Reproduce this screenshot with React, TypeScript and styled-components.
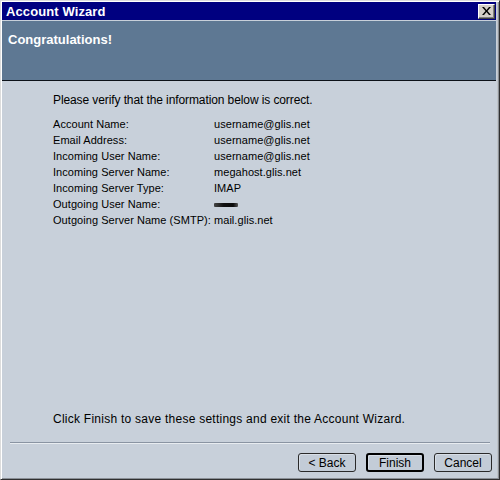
import { Fragment } from "react";
import styled, { createGlobalStyle } from "styled-components";

const Global = createGlobalStyle`
  html, body {
    margin: 0;
    padding: 0;
    background: #c8d0da;
  }
  * {
    box-sizing: border-box;
  }
`;

const Window = styled.div`
  width: 500px;
  height: 480px;
  display: flex;
  flex-direction: column;
  background: #c8d0da;
  border: 1px solid;
  border-color: #dcdcdc #303030 #303030 #dcdcdc;
  box-shadow: inset 1px 1px #ffffff, inset -1px -1px #8a8f96, inset -2px 0 #c0c4c8;
  padding: 1px 3px 1px 1px;
  font-family: "Liberation Sans", Arial, sans-serif;
  font-size: 12px;
  color: #000;
`;

const TitleBar = styled.div`
  height: 19px;
  flex: none;
  display: flex;
  align-items: center;
  justify-content: space-between;
  background: #000080;
  padding: 0 1px 0 4px;
  border-bottom: 1px solid #c8d0da;
`;

const Title = styled.span`
  color: #fff;
  font-weight: bold;
  font-size: 13px;
  letter-spacing: 0.1px;
`;

const CloseButton = styled.div`
  width: 17px;
  height: 15px;
  display: flex;
  align-items: center;
  justify-content: center;
  background: #d4d0c8;
  border: 1px solid;
  border-color: #ffffff #404040 #404040 #ffffff;
  box-shadow: inset -1px -1px #808080;
`;

const Header = styled.div`
  height: 60px;
  flex: none;
  background: #5e7893;
  border-bottom: 1px solid #0c1118;
  padding: 11px 0 0 6px;
`;

const HeaderTitle = styled.h1`
  margin: 0;
  color: #fff;
  font-size: 13px;
  font-weight: bold;
  line-height: 16px;
`;

const Body = styled.div`
  flex: 1;
  display: flex;
  flex-direction: column;
  padding: 11px 0 0 51px;
  line-height: 16px;
`;

const Intro = styled.p`
  margin: 0 0 8px;
  letter-spacing: -0.1px;
`;

const InfoTable = styled.div`
  display: grid;
  grid-template-columns: 161px auto;
  white-space: nowrap;
  font-size: 11px;
  letter-spacing: 0.05px;
`;

const Label = styled.span``;

const Value = styled.span`
  display: flex;
  align-items: center;
`;

const Redacted = styled.span`
  display: inline-block;
  width: 24px;
  height: 4px;
  margin-top: 1px;
  background: linear-gradient(90deg, #444 0%, #111 40%, #0a0a0a 80%, #555 100%);
  border-radius: 1px;
`;

const Footnote = styled.p`
  margin: auto 0 15px;
  letter-spacing: 0.25px;
`;

const Separator = styled.div`
  height: 2px;
  margin: 0 6px 0 8px;
  border-top: 1px solid #8a94a2;
  border-bottom: 1px solid #e8ecf0;
  flex: none;
`;

const ButtonRow = styled.div`
  display: flex;
  justify-content: flex-end;
  gap: 10px;
  padding: 9px 4px 6px 0;
  flex: none;
`;

const Button = styled.button<{ $default?: boolean }>`
  width: 58px;
  height: 19px;
  padding: 0;
  font-family: "Liberation Sans", Arial, sans-serif;
  font-size: 12px;
  color: #000;
  background: #c3ccd7;
  border: ${p => (p.$default ? "2px solid #000" : "1px solid #2a2a2a")};
  border-radius: 3px;
  box-shadow: inset 1px 1px #d8dee6;
  line-height: 1;
`;

const rows: [string, string | null][] = [
  ["Account Name:", "username@glis.net"],
  ["Email Address:", "username@glis.net"],
  ["Incoming User Name:", "username@glis.net"],
  ["Incoming Server Name:", "megahost.glis.net"],
  ["Incoming Server Type:", "IMAP"],
  ["Outgoing User Name:", null],
  ["Outgoing Server Name (SMTP):", "mail.glis.net"],
];

const App = () => (
  <Window>
    <Global />
    <TitleBar>
      <Title>Account Wizard</Title>
      <CloseButton>
        <svg width="9" height="8" viewBox="0 0 9 8">
          <path d="M0 0h2l2.5 3L7 0h2L5.5 4 9 8H7L4.5 5 2 8H0l3.5-4z" fill="#000" />
        </svg>
      </CloseButton>
    </TitleBar>
    <Header>
      <HeaderTitle>Congratulations!</HeaderTitle>
    </Header>
    <Body>
      <Intro>Please verify that the information below is correct.</Intro>
      <InfoTable>
        {rows.map(([label, value]) => (
          <Fragment key={label}>
            <Label>{label}</Label>
            <Value>{value ?? <Redacted />}</Value>
          </Fragment>
        ))}
      </InfoTable>
      <Footnote>Click Finish to save these settings and exit the Account Wizard.</Footnote>
    </Body>
    <Separator />
    <ButtonRow>
      <Button>&lt; Back</Button>
      <Button $default>Finish</Button>
      <Button>Cancel</Button>
    </ButtonRow>
  </Window>
);

export default App;
